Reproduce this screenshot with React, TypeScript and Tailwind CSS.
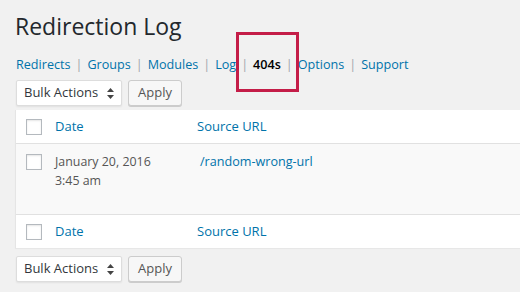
import React from "react";

const NAV = ["Redirects", "Groups", "Modules", "Log", "404s", "Options", "Support"];

function Checkbox() {
  return (
    <span className="block w-[16px] h-[16px] border border-[#b4b9be] bg-white shadow-[inset_0_1px_2px_rgba(0,0,0,0.1)] shrink-0" />
  );
}

function BulkBar() {
  return (
    <div className="flex items-center gap-[6px] pl-[16px]">
      <div className="w-[106px] h-[26px] bg-white border border-[#dddddd] rounded-[2px] shadow-[0_1px_2px_rgba(0,0,0,0.07)] flex items-center justify-between pl-[7px] pr-[7px] text-[13px] text-[#32373c]">
        <span>Bulk Actions</span>
        <svg width="7" height="11" viewBox="0 0 7 11" className="mt-[1px]">
          <path d="M3.5 0 L7 4 H0 Z" fill="#444" />
          <path d="M3.5 11 L7 7 H0 Z" fill="#444" />
        </svg>
      </div>
      <button className="w-[54px] h-[26px] bg-[#f7f7f7] border border-[#cccccc] rounded-[3px] shadow-[0_1px_0_#ccc] text-[13px] text-[#555] flex items-center justify-center">
        Apply
      </button>
    </div>
  );
}

function HeadRow({ top }: { top?: boolean }) {
  return (
    <div
      className={`flex items-center h-[34px] bg-white ${
        top ? "border-b border-[#e1e1e1]" : "border-t border-[#e1e1e1]"
      }`}
    >
      <div className="w-[39px] pl-[10px] flex items-center">
        <Checkbox />
      </div>
      <span className="w-[142px] text-[#0073aa] text-[13px]">Date</span>
      <span className="text-[#0073aa] text-[13px]">Source URL</span>
    </div>
  );
}

export default function App() {
  return (
    <div
      className="w-[520px] h-[292px] overflow-hidden bg-[#f1f1f1] text-[#32373c]"
      style={{ fontFamily: '"Open Sans", "Noto Sans", sans-serif' }}
    >
      <h1 className="pl-[15px] pt-[10px] text-[23px] leading-[32px] text-[#23282d] font-normal">
        Redirection Log
      </h1>

      <nav className="flex items-center pl-[16px] mt-[13px] h-[20px] text-[12.6px]">
        {NAV.map((item, i) => (
          <span key={item} className="flex items-center">
            {i > 0 && <span className="text-[#a0a5aa] px-[5px]">|</span>}
            {item === "404s" ? (
              <span className="relative font-semibold text-black">
                {item}
                <span className="absolute left-[-17px] right-[-18px] top-[-24px] bottom-[-18px] border-[3px] border-[#c41d48]" />
              </span>
            ) : (
              <span className="text-[#0073aa]">{item}</span>
            )}
          </span>
        ))}
      </nav>

      <div className="mt-[5px]">
        <BulkBar />
      </div>

      <div className="ml-[15px] mt-[4px] bg-white border-l border-[#e5e5e5] shadow-[0_1px_1px_rgba(0,0,0,0.04)]">
        <HeadRow top />
        <div className="flex items-start h-[70px] bg-[#f9f9f9] pt-[10px]">
          <div className="w-[39px] pl-[10px] flex items-center">
            <Checkbox />
          </div>
          <div className="w-[145px] text-[12.4px] leading-[19px] text-[#555] -mt-[2px]">
            January 20, 2016
            <br />
            3:45 am
          </div>
          <span className="text-[#0073aa] text-[12.6px] leading-[19px] -mt-[2px]">/random-wrong-url</span>
        </div>
        <HeadRow />
      </div>

      <div className="mt-[8px]">
        <BulkBar />
      </div>
    </div>
  );
}
